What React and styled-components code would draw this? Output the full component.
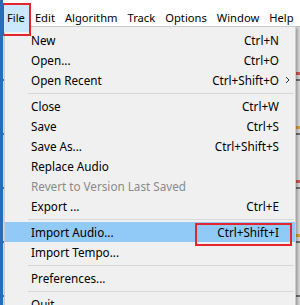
import React from 'react';
import styled, { createGlobalStyle } from 'styled-components';

const GlobalStyle = createGlobalStyle`
  html, body {
    margin: 0;
    padding: 0;
    background: #ffffff;
  }
  body {
    font-family: "Noto Sans", "Open Sans", sans-serif;
    font-size: 11.7px;
    color: #000;
  }
`;

const Window = styled.div`
  position: relative;
  width: 300px;
  height: 305px;
  overflow: hidden;
  border-left: 3px solid #2a6cb6;
  box-sizing: border-box;
  display: flex;
  flex-direction: column;
  background: #ffffff;
`;

const MenuBar = styled.div`
  display: flex;
  height: 26px;
  padding-left: 1px;
  background: #ffffff;
  flex-shrink: 0;
  font-size: 11.2px;
`;

const BarItem = styled.div`
  position: relative;
  margin-top: 4px;
  height: 28px;
  line-height: 27px;
  padding: ${p => (p.$active ? '0 5px 0 3px' : '0 5px')};
  background: ${p => (p.$active ? '#cce8ff' : 'transparent')};
  z-index: ${p => (p.$active ? 3 : 0)};
  white-space: nowrap;
`;

const Annotation = styled.div`
  position: absolute;
  border: 2px solid #e3262e;
  pointer-events: none;
  z-index: 4;
`;

const Workspace = styled.div`
  flex: 1;
  display: flex;
  flex-direction: column;
  background: #d9d9d9;
  border-top: 1px solid #bdbdbd;
`;

const TrackRow = styled.div`
  height: 52px;
  border-bottom: 2px solid #6e6e6e;
  display: flex;
  justify-content: flex-end;
  align-items: flex-end;
`;

const Clip = styled.div`
  width: 4px;
  height: 3px;
  margin-bottom: 4px;
  background: ${p => p.$color};
`;

const Dropdown = styled.div`
  position: absolute;
  left: 1px;
  top: 26px;
  width: 292px;
  box-sizing: border-box;
  padding: 3px 0 0;
  background: #f0f0f0;
  border: 1px solid #cccccc;
  border-bottom: none;
  box-shadow: 2px 2px 2px rgba(0, 0, 0, 0.25);
  z-index: 2;
`;

const Item = styled.div`
  position: relative;
  display: flex;
  align-items: center;
  height: 20px;
  padding-left: 26px;
  background: ${p => (p.$selected ? '#91c9f7' : 'transparent')};
  color: ${p => (p.$disabled ? '#8a8a8a' : '#000')};
  white-space: nowrap;
`;

const Label = styled.span`
  flex: 1;
`;

const Shortcut = styled.span`
  padding-left: 12px;
  text-align: right;
`;

const Arrow = styled.span`
  width: 16px;
  display: flex;
  align-items: center;
  justify-content: center;
  flex-shrink: 0;
`;

const Separator = styled.div`
  height: 6px;
  display: flex;
  align-items: center;
  padding: 0 1px 0 23px;
  &::after {
    content: '';
    flex: 1;
    height: 1px;
    background: #d7d7d7;
  }
`;

const Chevron = () => (
  <svg width="5" height="8" viewBox="0 0 5 8">
    <path d="M1 1 L4 4 L1 7" fill="none" stroke="#333" strokeWidth="1" />
  </svg>
);

const items = [
  { label: 'New', shortcut: 'Ctrl+N' },
  { label: 'Open...', shortcut: 'Ctrl+O' },
  { label: 'Open Recent', shortcut: 'Ctrl+Shift+O', submenu: true },
  { sep: true },
  { label: 'Close', shortcut: 'Ctrl+W' },
  { label: 'Save', shortcut: 'Ctrl+S' },
  { label: 'Save As...', shortcut: 'Ctrl+Shift+S' },
  { label: 'Replace Audio' },
  { label: 'Revert to Version Last Saved', disabled: true },
  { label: 'Export ...', shortcut: 'Ctrl+E' },
  { sep: true },
  { label: 'Import Audio...', shortcut: 'Ctrl+Shift+I', selected: true, marked: true },
  { label: 'Import Tempo...' },
  { sep: true },
  { label: 'Preferences...' },
  { sep: true },
  { label: 'Quit' },
];

const menus = ['File', 'Edit', 'Algorithm', 'Track', 'Options', 'Window', 'Help'];

const clips = ['#d9534f', '#e0a030', '#d9534f', '#e0a030', 'transparent'];

export default function App() {
  return (
    <>
      <GlobalStyle />
      <Window>
        <MenuBar>
          {menus.map((m, i) => (
            <BarItem key={m} $active={i === 0}>
              {m}
              {i === 0 && <Annotation style={{ left: -2, right: -1, top: -1, bottom: -4 }} />}
            </BarItem>
          ))}
        </MenuBar>
        <Workspace>
          {clips.map((c, i) => (
            <TrackRow key={i}>
              <Clip $color={c} />
            </TrackRow>
          ))}
        </Workspace>
        <Dropdown>
          {items.map((it, i) =>
            it.sep ? (
              <Separator key={i} />
            ) : (
              <Item key={i} $selected={it.selected} $disabled={it.disabled}>
                <Label>{it.label}</Label>
                {it.shortcut && <Shortcut>{it.shortcut}</Shortcut>}
                <Arrow>{it.submenu && <Chevron />}</Arrow>
                {it.marked && <Annotation style={{ left: 190, right: 3, top: 1, bottom: -4 }} />}
              </Item>
            )
          )}
        </Dropdown>
      </Window>
    </>
  );
}
